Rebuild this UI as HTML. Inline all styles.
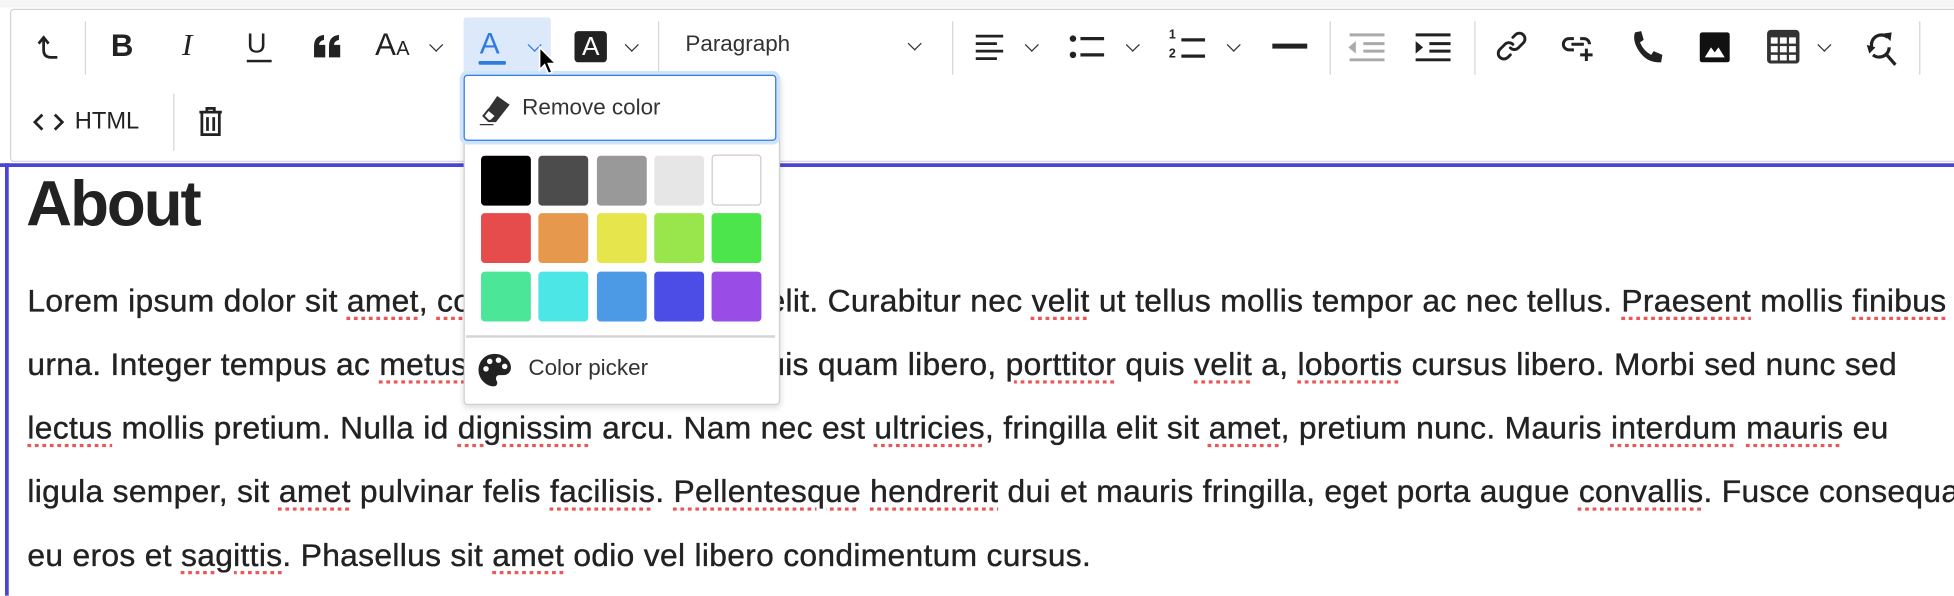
<!DOCTYPE html>
<html><head><meta charset="utf-8"><style>
html,body{margin:0;padding:0;background:#fff;overflow:hidden;width:1954px;height:596px}
#w{position:absolute;left:0;top:0;width:1568px;height:478px;transform:scale(1.24617);transform-origin:0 0;font-family:"Liberation Sans",Arial,sans-serif;color:#222}
.a{position:absolute}
svg.i{position:absolute;overflow:visible}
.sep{position:absolute;width:1px;background:#d6d6d6}
.chev{position:absolute;width:7px;height:7px;border-right:1.8px solid #333;border-bottom:1.8px solid #333;transform:rotate(45deg)}
.p{position:absolute;left:22px;font-size:25.5px;line-height:30px;white-space:nowrap;letter-spacing:0.25px;color:#222;-webkit-text-stroke:0.3px #222}
.s{text-decoration:underline dotted #e55;text-underline-offset:4px}
.sw{position:absolute;width:40px;height:40px;border-radius:3px}
</style></head><body><div id="w">
<!-- toolbar -->
<div class="a" style="left:0;top:0;width:1568px;height:6px;background:#f6f6f6"></div>
<div class="a" style="left:8px;top:7px;width:1570px;height:121px;border:1.5px solid #d4d4d4;border-radius:3px;background:#fff"></div>
<!-- row1 -->
<svg class="i" style="left:26px;top:26px" width="24" height="24" viewBox="0 0 24 24"><path d="M5 9 L9 4 L13 9 M9 4 V14 Q9 20 15 20 H20" fill="none" stroke="#222" stroke-width="2.2"/></svg>
<div class="sep" style="left:68px;top:17px;height:43px"></div>
<div class="a" style="left:89px;top:23px;font-size:25px;font-weight:bold">B</div>
<div class="a" style="left:146px;top:23px;font-size:25px;font-style:italic;font-family:'Liberation Serif',serif">I</div>
<div class="a" style="left:198px;top:22px;font-size:22px">U</div>
<div class="a" style="left:198px;top:48px;width:20px;height:2px;background:#222"></div>
<svg class="i" style="left:251px;top:28px" width="24" height="18" viewBox="0 0 24 18"><path d="M1 18V9Q1 1 9 0V4Q5 5 5 8H10V18Z M13 18V9Q13 1 21 0V4Q17 5 17 8H22V18Z" fill="#222"/></svg>
<div class="a" style="left:301px;top:22px;font-size:25px">A</div><div class="a" style="left:318px;top:31px;font-size:16px">A</div>
<div class="chev" style="left:346px;top:32px"></div>
<div class="a" style="left:372px;top:14px;width:70px;height:45px;background:#dbe9fb;border-radius:2px"></div>
<div class="a" style="left:385px;top:22px;font-size:24px;color:#2f7be0">A</div>
<div class="a" style="left:384px;top:49px;width:22px;height:3px;background:#2f7be0;border-radius:1px"></div>
<div class="chev" style="left:425px;top:32px;border-color:#2f7be0"></div>
<div class="a" style="left:461px;top:25px;width:26px;height:25px;background:#222;border-radius:3px;color:#fff;font-size:21px;text-align:center;line-height:26px">A</div>
<div class="chev" style="left:503px;top:32px"></div>
<div class="sep" style="left:528px;top:17px;height:43px"></div>
<div class="a" style="left:550px;top:25px;font-size:18px;color:#333">Paragraph</div>
<div class="chev" style="left:730px;top:31px"></div>
<div class="sep" style="left:764px;top:17px;height:43px"></div>
<svg class="i" style="left:783px;top:28px" width="24" height="20" viewBox="0 0 24 20"><path d="M0 1H22M0 7H17M0 13H22M0 19H17" stroke="#222" stroke-width="2.2"/></svg>
<div class="chev" style="left:824px;top:32px"></div>
<svg class="i" style="left:858px;top:27px" width="28" height="22" viewBox="0 0 28 22"><circle cx="3" cy="4" r="2.6" fill="#222"/><circle cx="3" cy="17" r="2.6" fill="#222"/><path d="M9 4H28M9 17H28" stroke="#222" stroke-width="2.6"/></svg>
<div class="chev" style="left:905px;top:32px"></div>
<div class="a" style="left:938px;top:23px;font-size:10px;font-weight:bold">1</div><div class="a" style="left:938px;top:38px;font-size:10px;font-weight:bold">2</div>
<svg class="i" style="left:946px;top:27px" width="22" height="22" viewBox="0 0 22 22"><path d="M2 5H21M2 18H21" stroke="#222" stroke-width="2.6"/></svg>
<div class="chev" style="left:986px;top:32px"></div>
<div class="a" style="left:1021px;top:35px;width:28px;height:3.5px;background:#222"></div>
<div class="sep" style="left:1067px;top:17px;height:43px"></div>
<svg class="i" style="left:1082px;top:27px" width="30" height="22" viewBox="0 0 30 22"><path d="M1 1H29M12 8H29M12 14H29M1 21H29" stroke="#aaa" stroke-width="2.4"/><path d="M0 11L6 6V16Z" fill="#aaa"/></svg>
<svg class="i" style="left:1135px;top:27px" width="30" height="22" viewBox="0 0 30 22"><path d="M1 1H29M12 8H29M12 14H29M1 21H29" stroke="#222" stroke-width="2.4"/><path d="M7 11L1 6V16Z" fill="#222"/></svg>
<div class="sep" style="left:1183px;top:17px;height:43px"></div>
<svg class="i" style="left:1200px;top:24px" width="26" height="26" viewBox="0 0 26 26"><path d="M14 6l2-2a4.5 4.5 0 0 1 6.4 6.4l-4 4a4.5 4.5 0 0 1-6.4 0M12 20l-2 2a4.5 4.5 0 0 1-6.4-6.4l4-4a4.5 4.5 0 0 1 6.4 0" fill="none" stroke="#222" stroke-width="2.3" stroke-linecap="round"/></svg>
<svg class="i" style="left:1254px;top:28px" width="28" height="22" viewBox="0 0 28 22"><path d="M9 3H5a4.5 4.5 0 0 0 0 9h4M14 3h3a4.5 4.5 0 0 1 4.5 4.5M7 7.5h10M19 11v10M14 16h10" fill="none" stroke="#222" stroke-width="2.4"/></svg>
<svg class="i" style="left:1309px;top:24px" width="26" height="28" viewBox="0 0 26 28"><path d="M3 2L8 1L10 8L7 10Q10 17 16 20L18 17L25 20L24 26Q12 27 5 15Q1 8 3 2Z" fill="#222"/></svg>
<svg class="i" style="left:1364px;top:26px" width="24" height="24" viewBox="0 0 24 24"><rect x="0" y="0" width="24" height="24" rx="2" fill="#111"/><path d="M4 20L9 12L12 16L15 12L20 20Z" fill="#fff"/></svg>
<svg class="i" style="left:1418px;top:24px" width="26" height="27" viewBox="0 0 26 27"><rect x="0" y="0" width="26" height="27" rx="3" fill="#333"/><g fill="#fff"><rect x="3" y="6" width="5.5" height="5"/><rect x="10.3" y="6" width="5.5" height="5"/><rect x="17.6" y="6" width="5.5" height="5"/><rect x="3" y="13" width="5.5" height="5"/><rect x="10.3" y="13" width="5.5" height="5"/><rect x="17.6" y="13" width="5.5" height="5"/><rect x="3" y="20" width="5.5" height="4.5"/><rect x="10.3" y="20" width="5.5" height="4.5"/><rect x="17.6" y="20" width="5.5" height="4.5"/></g></svg>
<div class="chev" style="left:1460px;top:32px"></div>
<svg class="i" style="left:1494px;top:23px" width="30" height="30" viewBox="0 0 30 30"><path d="M8 15a8 8 0 0 1 13-8M22 15a8 8 0 0 1-13 6M20 21l7 8" fill="none" stroke="#222" stroke-width="2.6"/><path d="M17 4l7-1l-1 7z M4 13l7 2l-5 5z" fill="#222"/></svg>
<div class="sep" style="left:1540px;top:17px;height:43px"></div>
<!-- row2 -->
<svg class="i" style="left:27px;top:91px" width="24" height="14" viewBox="0 0 24 14"><path d="M7 1L1 7L7 13M17 1L23 7L17 13" fill="none" stroke="#222" stroke-width="2.2"/></svg>
<div class="a" style="left:60px;top:87px;font-size:19px">HTML</div>
<div class="sep" style="left:139px;top:75px;height:46px"></div>
<svg class="i" style="left:159px;top:86px" width="20" height="24" viewBox="0 0 20 24"><path d="M1 4H19M7 4V1H13V4M3 4V22H17V4M7.5 8V19M12.5 8V19" fill="none" stroke="#222" stroke-width="2.2"/></svg>
<!-- editor -->
<div class="a" style="left:0;top:131px;width:1568px;height:3px;background:#4b44d6"></div>
<div class="a" style="left:4px;top:131px;width:3px;height:347px;background:#4b44d6"></div>
<div class="a" style="left:21px;top:134px;font-size:51px;font-weight:bold;color:#222;letter-spacing:-1.6px">About</div>
<div class="p" style="top:227px">Lorem ipsum dolor sit <span class="s">amet</span>, <span class="s">consectetur</span> adipiscing elit. Curabitur nec <span class="s">velit</span> ut tellus mollis tempor ac nec tellus. <span class="s">Praesent</span> mollis <span class="s">finibus</span></div>
<div class="p" style="top:278px">urna. Integer tempus ac <span class="s">metus</span> vel ornare sapien. Duis quam libero, <span class="s">porttitor</span> quis <span class="s">velit</span> a, <span class="s">lobortis</span> cursus libero. Morbi sed nunc sed</div>
<div class="p" style="top:329px"><span class="s">lectus</span> mollis pretium. Nulla id <span class="s">dignissim</span> arcu. Nam nec est <span class="s">ultricies</span>, fringilla elit sit <span class="s">amet</span>, pretium nunc. Mauris <span class="s">interdum</span> <span class="s">mauris</span> eu</div>
<div class="p" style="top:380px">ligula semper, sit <span class="s">amet</span> pulvinar felis <span class="s">facilisis</span>. <span class="s">Pellentesque</span> <span class="s">hendrerit</span> dui et mauris fringilla, eget porta augue <span class="s">convallis</span>. Fusce consequat</div>
<div class="p" style="top:431px">eu eros et <span class="s">sagittis</span>. Phasellus sit <span class="s">amet</span> odio vel libero condimentum cursus.</div>
<!-- dropdown -->
<div class="a" style="left:372px;top:60px;width:252px;height:263px;background:#fff;border:1px solid #d0d0d0;border-radius:3px;box-shadow:0 2px 5px rgba(0,0,0,.15)"></div>
<div class="a" style="left:372px;top:60px;width:249px;height:51px;background:#fff;border:1.5px solid #2f7be0;border-radius:3px;box-shadow:0 0 0 3px #cfe3fb"></div>
<svg class="i" style="left:384px;top:75px" width="28" height="26" viewBox="0 0 28 26"><path d="M15 2L25 9L14 23H8L4 18Z" fill="#333"/><path d="M4 18L8 13L14 18L10 22H8Z" fill="#fff" stroke="#333" stroke-width="1.6"/><path d="M1 25H12" stroke="#333" stroke-width="1"/></svg>
<div class="a" style="left:419px;top:76px;font-size:18px;color:#333">Remove color</div>
<div class="sw" style="left:386px;top:125px;background:#000"></div>
<div class="sw" style="left:432px;top:125px;background:#4c4c4c"></div>
<div class="sw" style="left:479px;top:125px;background:#999"></div>
<div class="sw" style="left:525px;top:125px;background:#e6e6e6"></div>
<div class="sw" style="left:571px;top:124px;background:#fff;border:1.5px solid #ccc;width:38px;height:39px"></div>
<div class="sw" style="left:386px;top:171px;background:#e64c4c"></div>
<div class="sw" style="left:432px;top:171px;background:#e6994c"></div>
<div class="sw" style="left:479px;top:171px;background:#e6e64c"></div>
<div class="sw" style="left:525px;top:171px;background:#99e64c"></div>
<div class="sw" style="left:571px;top:171px;background:#4ce64c"></div>
<div class="sw" style="left:386px;top:218px;background:#4ce699"></div>
<div class="sw" style="left:432px;top:218px;background:#4ce6e6"></div>
<div class="sw" style="left:479px;top:218px;background:#4c99e6"></div>
<div class="sw" style="left:525px;top:218px;background:#4c4ce6"></div>
<div class="sw" style="left:571px;top:218px;background:#994ce6"></div>
<div class="a" style="left:374px;top:269px;width:248px;height:1.5px;background:#d4d4d4"></div>
<svg class="i" style="left:383px;top:283px" width="28" height="28" viewBox="0 0 28 28"><path d="M14 1C6 1 1 7 1 14c0 7 6 13 12 13c2 0 3-1 3-3c0-1-1-2-1-3c0-2 1-3 3-3h3c4 0 6-3 6-6C27 6 21 1 14 1Z" fill="#222"/><circle cx="7" cy="13" r="2.2" fill="#fff"/><circle cx="10" cy="7" r="2.2" fill="#fff"/><circle cx="17" cy="6" r="2.2" fill="#fff"/><circle cx="22" cy="11" r="2.2" fill="#fff"/></svg>
<div class="a" style="left:424px;top:285px;font-size:18px;color:#333">Color picker</div>
<!-- cursor -->
<svg class="i" style="left:432px;top:37px" width="16" height="24" viewBox="0 0 16 24"><path d="M1 1V19L5 15L8 22L11 21L8 14H14Z" fill="#000" stroke="#fff" stroke-width="1.3"/></svg>
</div></body></html>
